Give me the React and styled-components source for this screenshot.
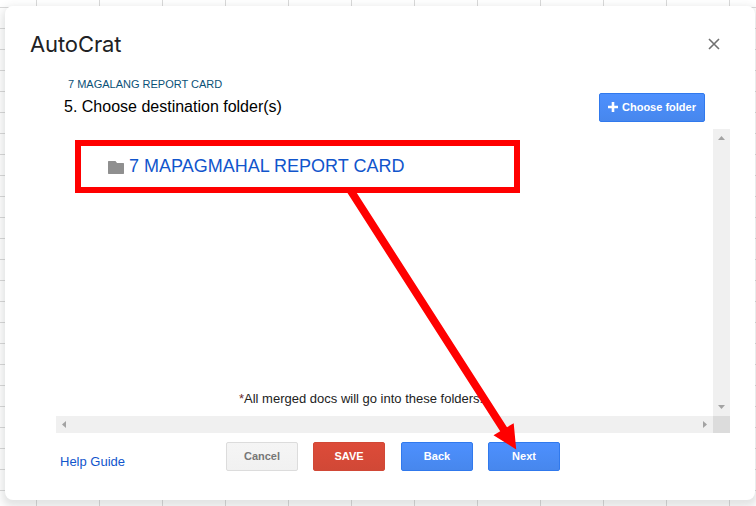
import styled, { createGlobalStyle, css } from 'styled-components';

const App = () => {
    return (
        <Sheet>
            <GlobalStyle />
            <Dialog>
                <Header>
                    <Title>AutoCrat</Title>
                    <CloseButton aria-label="Close">
                        <svg width="12" height="12" viewBox="0 0 12 12">
                            <path d="M1 1L11 11M11 1L1 11" stroke="#717171" strokeWidth="1.6" fill="none" />
                        </svg>
                    </CloseButton>
                </Header>

                <Step>
                    <StepHeading>
                        <JobName>7 MAGALANG REPORT CARD</JobName>
                        <StepTitle>5. Choose destination folder(s)</StepTitle>
                    </StepHeading>
                    <ChooseButton $variant="action">
                        <svg width="10" height="10" viewBox="0 0 10 10">
                            <path d="M0 5H10M5 0V10" stroke="#fff" strokeWidth="2.6" />
                        </svg>
                        Choose folder
                    </ChooseButton>
                </Step>

                <ScrollArea>
                    <Folders>
                        <FolderRow>
                            <FolderIcon width="16" height="13" viewBox="0 0 16 13">
                                <path
                                    d="M.5 0H7.5L9 2H15.5L16 2.5V12.5L15.5 13H.5L0 12.5V.5Z"
                                    fill="#8f8f8f"
                                />
                            </FolderIcon>
                            <FolderLink>7 MAPAGMAHAL REPORT CARD</FolderLink>
                        </FolderRow>
                        <Note>
                            <Star>*</Star>All merged docs will go into these folders.
                        </Note>
                    </Folders>
                    <VerticalBar>
                        <svg width="7" height="4" viewBox="0 0 7 4"><path d="M0 4L3.5 0L7 4Z" fill="#a3a3a3" /></svg>
                        <svg width="7" height="4" viewBox="0 0 7 4"><path d="M0 0H7L3.5 4Z" fill="#a3a3a3" /></svg>
                    </VerticalBar>
                    <HorizontalBar>
                        <svg width="4" height="7" viewBox="0 0 4 7"><path d="M4 0V7L0 3.5Z" fill="#a3a3a3" /></svg>
                        <svg width="4" height="7" viewBox="0 0 4 7"><path d="M0 0L4 3.5L0 7Z" fill="#a3a3a3" /></svg>
                    </HorizontalBar>
                    <Corner />
                </ScrollArea>

                <Footer>
                    <HelpLink>Help Guide</HelpLink>
                    <Buttons>
                        <Button>Cancel</Button>
                        <Button $variant="create">SAVE</Button>
                        <NavButtons>
                            <Button $variant="action">Back</Button>
                            <Button $variant="action">Next</Button>
                        </NavButtons>
                    </Buttons>
                </Footer>
            </Dialog>

            {/*highlight and arrow over the dialog*/}
            <Highlight />
            <Arrow width="171" height="260" viewBox="0 0 171 260">
                <path
                    d="M1.5 0H10.8L161 234.2L167.7 230.3L170.2 256.5L147.5 242.2L154.2 238.2Z"
                    fill="#f00"
                />
            </Arrow>
        </Sheet>
    );
}

export default App;

const GlobalStyle = createGlobalStyle`
    * {
        box-sizing: border-box;
    }

    body {
        margin: 0;
        font-family: "Liberation Sans", Arial, sans-serif;
    }
`;

const Sheet = styled.div`
    position: relative;
    width: 756px;
    height: 506px;
    padding: 6px 1px 6px 5px;
    overflow: hidden;
    background-color: #fff;
    background-image:
        linear-gradient(to right, #d9d9d9 1px, transparent 1px),
        linear-gradient(to bottom, #d9d9d9 1px, transparent 1px);
    background-size: 63px 21px;
    background-position: 36px 7px;
`;

const Dialog = styled.div`
    height: 494px;
    background-color: #fff;
    border-radius: 8px;
    box-shadow: 0 4px 8px 3px rgba(60, 64, 67, .15);
`;

const Header = styled.div`
    display: flex;
    align-items: center;
    justify-content: space-between;
    height: 70px;
    padding: 6px 35px 0 25px;
`;

const Title = styled.div`
    font-family: Inter, sans-serif;
    font-size: 22px;
    line-height: 28px;
    letter-spacing: -.1px;
    color: #202124;
`;

const CloseButton = styled.button`
    display: flex;
    padding: 0;
    border: none;
    background: none;
`;

const Step = styled.div`
    display: flex;
    justify-content: space-between;
    height: 53px;
    padding: 0 50px 0 59px;
`;

const StepHeading = styled.div`
    display: flex;
    flex-direction: column;
`;

const JobName = styled.div`
    padding: 2px 0 0 4px;
    font-size: 11px;
    line-height: 13px;
    color: #0b5177;
`;

const StepTitle = styled.div`
    margin-top: 7px;
    font-size: 16px;
    line-height: 18px;
    color: #000;
`;

const action = css`
    border-color: #3079ed;
    background: linear-gradient(#4d90fe, #4787ed);
    color: #fff;
`;

const create = css`
    border-color: #d14836;
    background: linear-gradient(#dd4b39, #d14836);
    color: #fff;
`;

const Button = styled.button`
    display: flex;
    align-items: center;
    justify-content: center;
    width: 72px;
    height: 29px;
    padding: 0 0 2px;
    border: 1px solid #dcdcdc;
    border-radius: 2px;
    background: linear-gradient(#f5f5f5, #f1f1f1);
    font-family: "Liberation Sans", Arial, sans-serif;
    font-size: 11px;
    font-weight: 700;
    color: #777;
    ${props => props.$variant === 'action' && action}
    ${props => props.$variant === 'create' && create}
`;

const ChooseButton = styled(Button)`
    gap: 4px;
    width: 106px;
    margin-top: 17px;
`;

const ScrollArea = styled.div`
    display: grid;
    grid-template-columns: 657px 17px;
    grid-template-rows: 287px 17px;
    margin-left: 51px;
`;

const Folders = styled.div`
    display: flex;
    flex-direction: column;
    justify-content: space-between;
    padding: 27px 0 10px 52px;
`;

const FolderRow = styled.div`
    display: flex;
    align-items: center;
    gap: 5px;
`;

const FolderIcon = styled.svg`
    margin-top: 2px;
`;

const FolderLink = styled.div`
    font-size: 18px;
    line-height: 21px;
    color: #15c;
`;

const Note = styled.div`
    padding-left: 131px;
    font-size: 13px;
    line-height: 15px;
    color: #222;
`;

const Star = styled.span`
    color: #6b2a2a;
`;

const VerticalBar = styled.div`
    display: flex;
    flex-direction: column;
    align-items: center;
    justify-content: space-between;
    padding: 7px 0;
    background-color: #f0f0f0;
`;

const HorizontalBar = styled.div`
    display: flex;
    align-items: center;
    justify-content: space-between;
    padding: 0 6px;
    background-color: #f0f0f0;
`;

const Corner = styled.div`
    background-color: #dcdcdc;
`;

const Footer = styled.div`
    display: flex;
    padding: 9px 0 0 55px;
`;

const HelpLink = styled.div`
    width: 166px;
    padding-top: 12px;
    font-size: 13px;
    line-height: 15px;
    color: #15c;
`;

const Buttons = styled.div`
    display: flex;
    gap: 15px;
`;

const NavButtons = styled.div`
    display: flex;
    gap: 15px;
    margin-left: 1px;
`;

const Highlight = styled.div`
    position: absolute;
    top: 140px;
    left: 75px;
    width: 445px;
    height: 53px;
    border: 6px solid #f00;
`;

const Arrow = styled.svg`
    position: absolute;
    top: 193px;
    left: 346px;
`;
